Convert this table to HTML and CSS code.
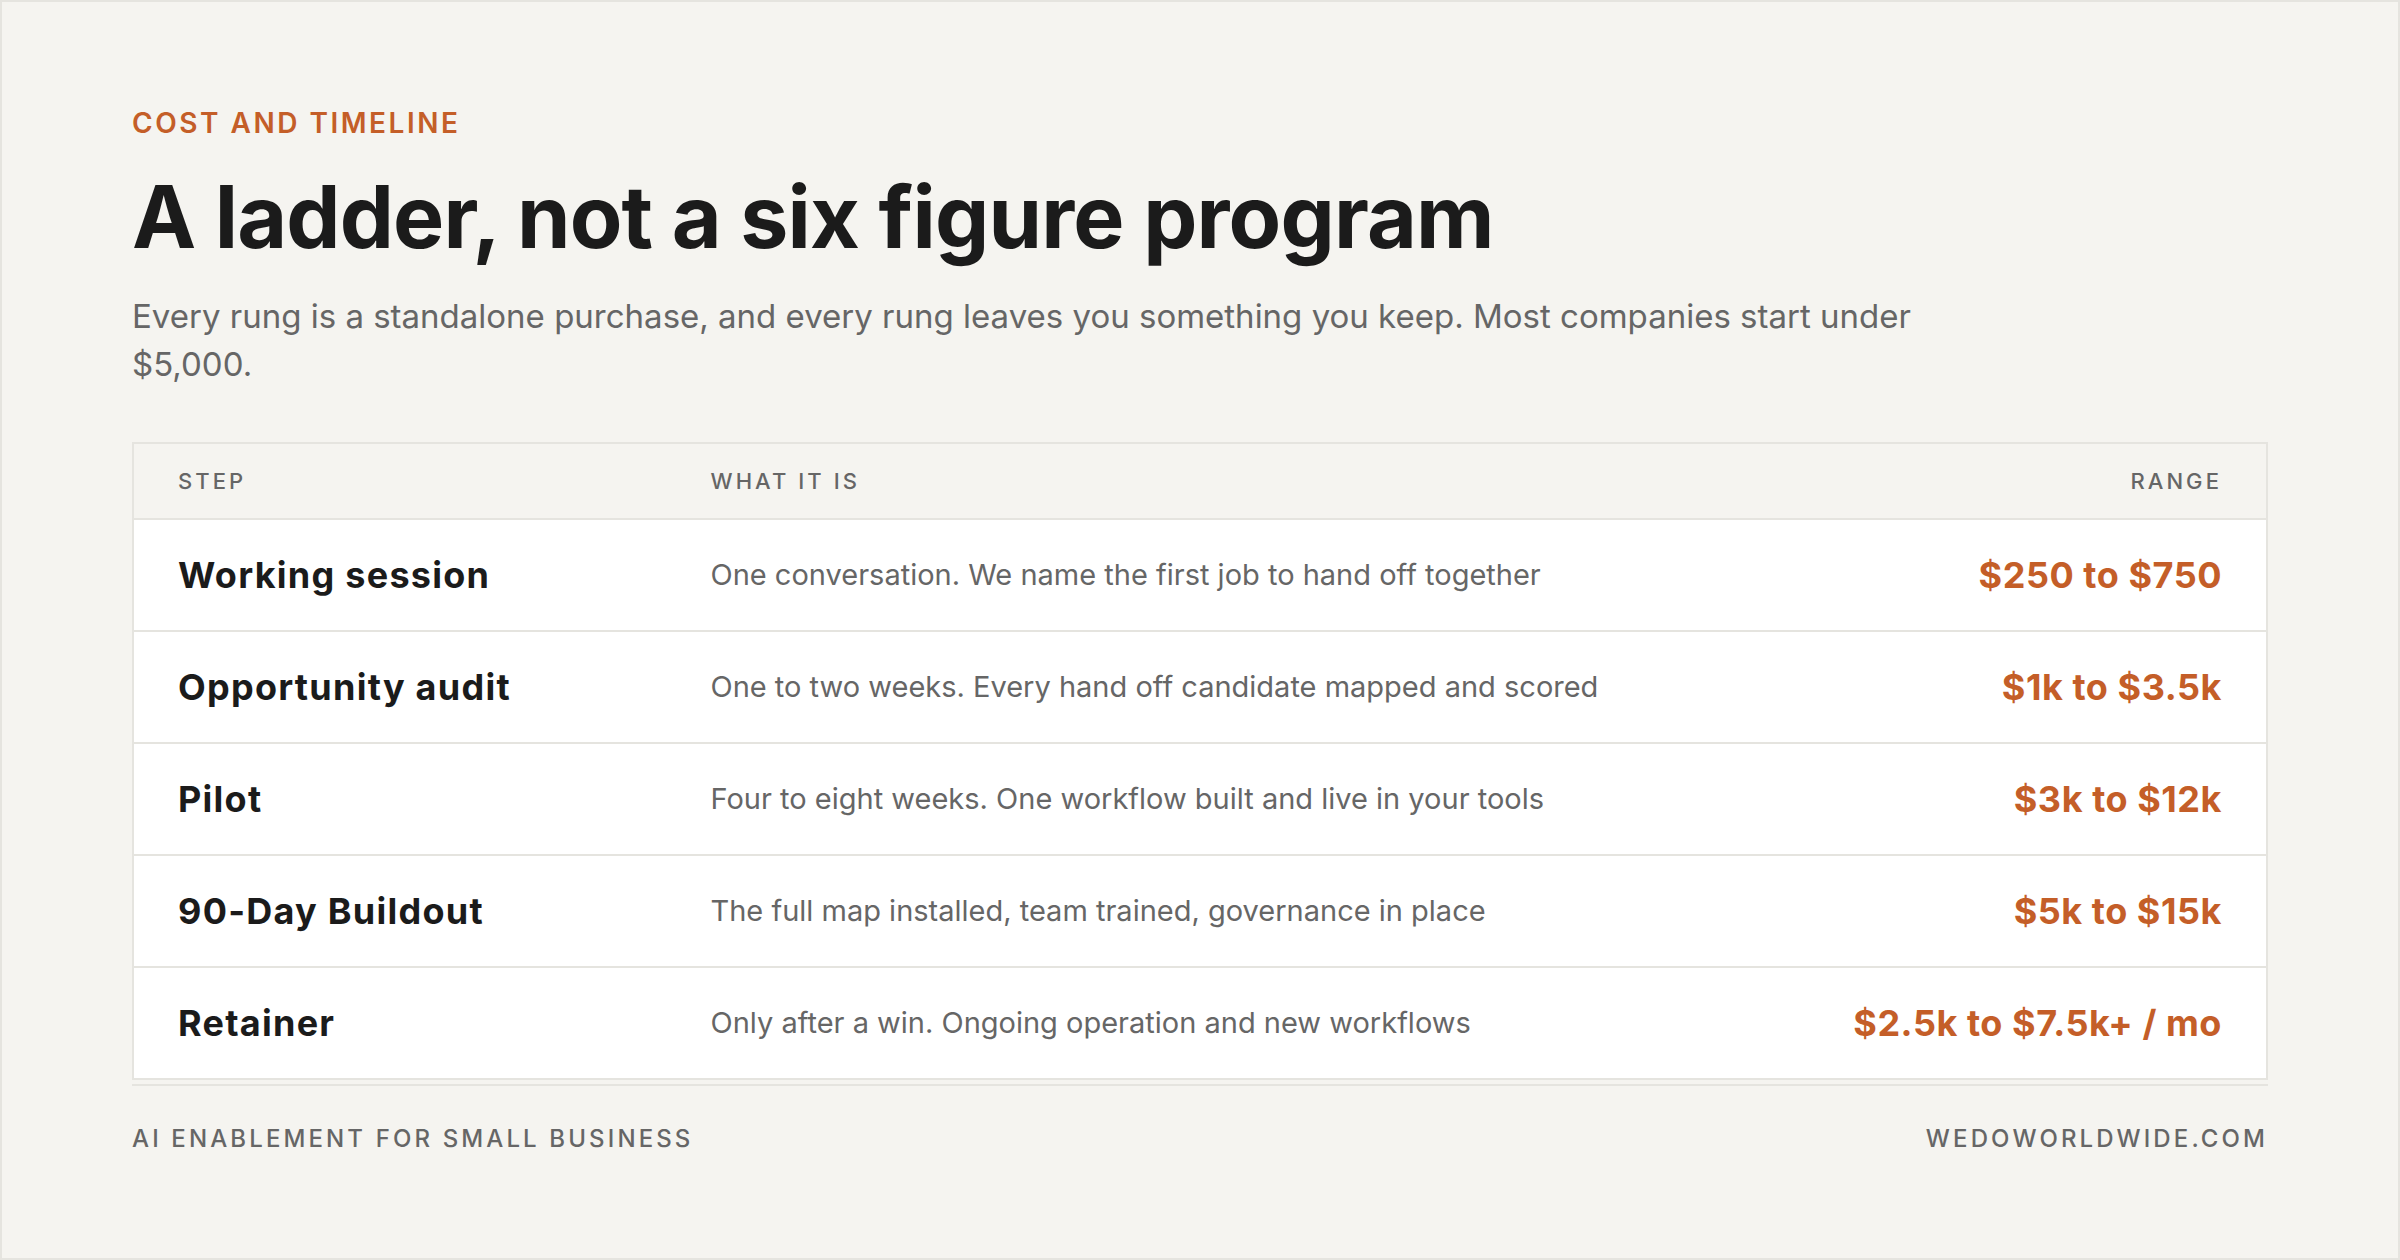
FILE: index.html
```html
<!DOCTYPE html>
<html lang="en">
<head>
    <meta charset="UTF-8">
    <meta name="viewport" content="width=device-width, initial-scale=1.0">
    <title>Cost and timeline</title>
    <link rel="stylesheet" href="styles.css">
</head>
<body>
    <div class="page">
        <div class="eyebrow">Cost and timeline</div>
        <h1>A ladder, not a six figure program</h1>
        <p class="lead">Every rung is a standalone purchase, and every rung leaves you something you keep. Most companies start under $5,000.</p>

        <table class="ladder">
            <thead>
                <tr>
                    <th class="col-step">Step</th>
                    <th>What it is</th>
                    <th class="col-range">Range</th>
                </tr>
            </thead>
            <tbody>
                <tr>
                    <td class="step">Working session</td>
                    <td class="desc">One conversation. We name the first job to hand off together</td>
                    <td class="range">$250 to $750</td>
                </tr>
                <tr>
                    <td class="step">Opportunity audit</td>
                    <td class="desc">One to two weeks. Every hand off candidate mapped and scored</td>
                    <td class="range">$1k to $3.5k</td>
                </tr>
                <tr>
                    <td class="step">Pilot</td>
                    <td class="desc">Four to eight weeks. One workflow built and live in your tools</td>
                    <td class="range">$3k to $12k</td>
                </tr>
                <tr>
                    <td class="step">90-Day Buildout</td>
                    <td class="desc">The full map installed, team trained, governance in place</td>
                    <td class="range">$5k to $15k</td>
                </tr>
                <tr>
                    <td class="step">Retainer</td>
                    <td class="desc">Only after a win. Ongoing operation and new workflows</td>
                    <td class="range">$2.5k to $7.5k+ / mo</td>
                </tr>
            </tbody>
        </table>

        <div class="footer">
            <span>AI Enablement for small business</span>
            <span>wedoworldwide.com</span>
        </div>
    </div>
</body>
</html>
```

FILE: styles.css
```css
* {
    box-sizing: border-box;
}

body {
    margin: 0;
    background: #f5f4f0;
    font-family: Inter, "Noto Sans", sans-serif;
    color: #1b1b1b;
}

.page {
    width: 2400px;
    height: 1260px;
    border: 2px solid #e5e4df;
    padding: 104px 130px 0;
    display: flex;
    flex-direction: column;
}

.eyebrow {
    color: #c45e28;
    font-size: 28px;
    font-weight: 600;
    letter-spacing: 0.09em;
    text-transform: uppercase;
    line-height: 34px;
}

h1 {
    font-size: 86px;
    font-weight: 700;
    line-height: 1.1;
    letter-spacing: -0.01em;
    margin: 30px 0 0;
}

.lead {
    color: #666;
    font-size: 33px;
    line-height: 48px;
    max-width: 1860px;
    margin: 27px 0 0;
}

.ladder {
    margin-top: 54px;
    width: 100%;
    border-collapse: collapse;
    border: 2px solid #e5e4df;
}

.ladder th {
    height: 76px;
    padding: 0 44px;
    text-align: left;
    color: #666;
    font-size: 22px;
    font-weight: 500;
    letter-spacing: 0.14em;
    text-transform: uppercase;
    border-bottom: 2px solid #e5e4df;
}

.ladder .col-step {
    width: 25%;
}

.ladder .col-range {
    text-align: right;
}

.ladder td {
    height: 112px;
    padding: 0 44px;
    background: #fff;
    border-top: 2px solid #e5e4df;
}

.step {
    font-size: 36px;
    font-weight: 700;
    letter-spacing: 0.035em;
}

.desc {
    color: #666;
    font-size: 29px;
}

.range {
    text-align: right;
    color: #c45e28;
    font-size: 36px;
    font-weight: 700;
    letter-spacing: 0.015em;
    white-space: nowrap;
}

.footer {
    margin-top: 4px;
    border-top: 2px solid #e5e4df;
    padding-top: 38px;
    display: flex;
    justify-content: space-between;
    color: #666;
    font-size: 24px;
    font-weight: 500;
    letter-spacing: 0.13em;
    text-transform: uppercase;
}
```
